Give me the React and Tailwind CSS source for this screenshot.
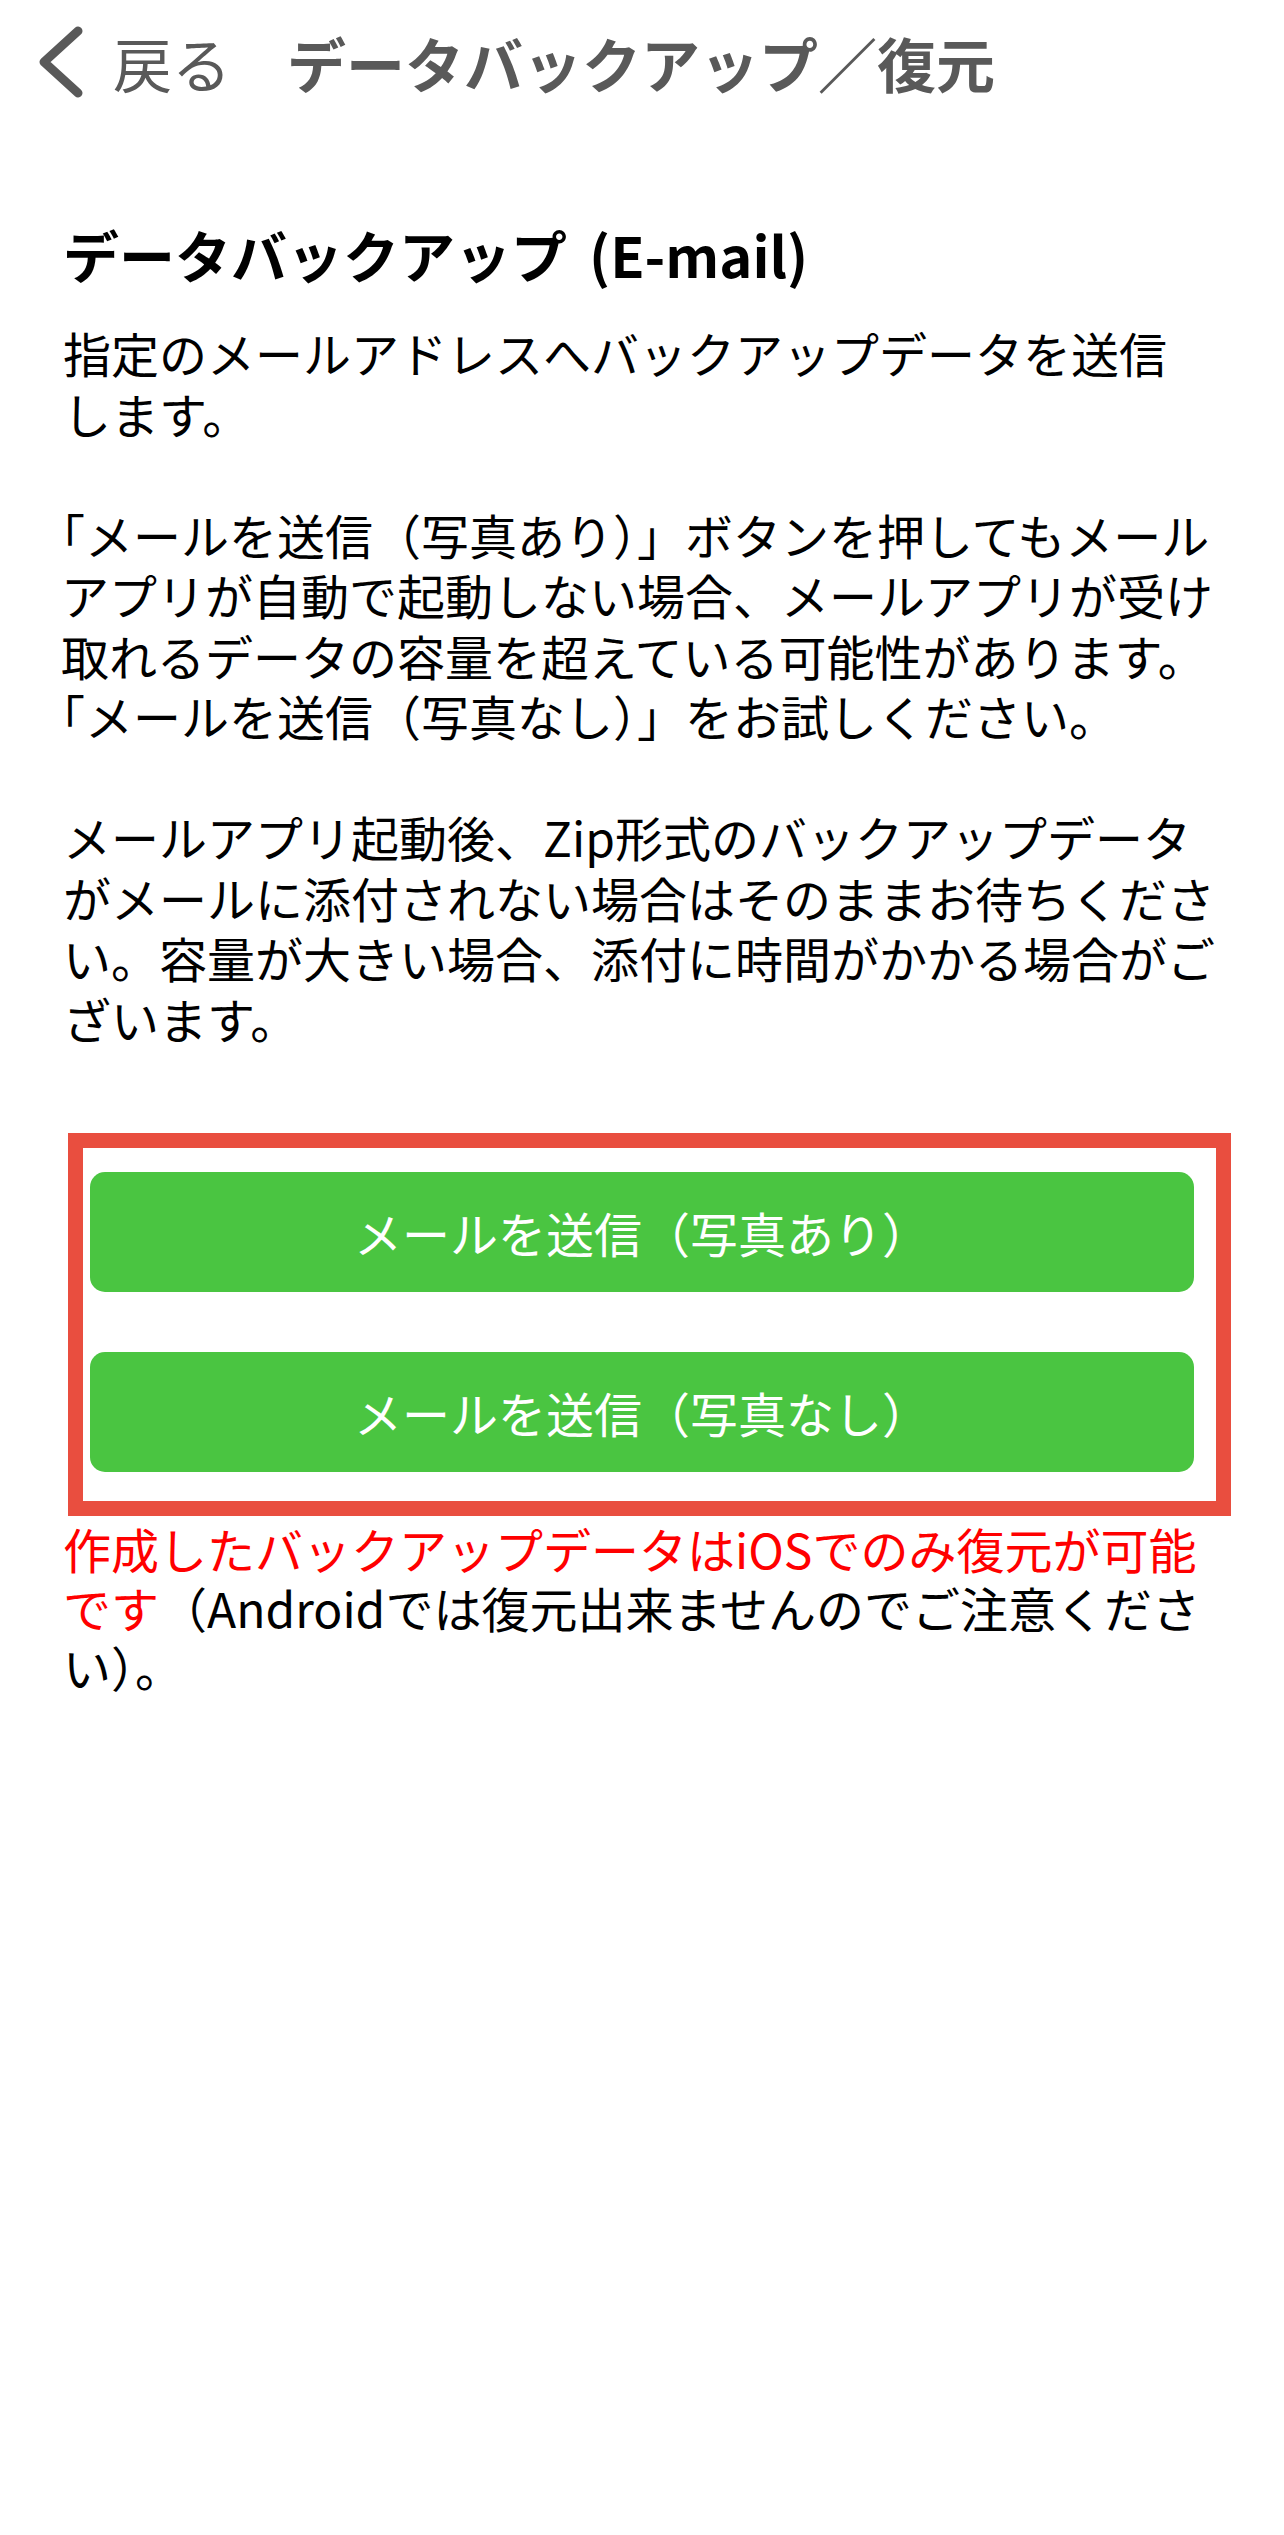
export default function App() {
  return (
    <div className="w-[1284px] min-h-[2535px] bg-white text-black font-['Noto_Sans_CJK_JP','Noto_Sans',sans-serif]">
      <header className="flex items-center h-[124px]">
        <svg className="ml-[36px]" width="48" height="80" viewBox="0 0 48 80" fill="none">
          <path d="M42 9 L8 40 L42 71" stroke="#595959" strokeWidth="9" strokeLinecap="round" strokeLinejoin="round" />
        </svg>
        <span className="ml-[29px] text-[59px] leading-none text-[#595959]">戻る</span>
        <h1 className="ml-[56px] text-[59px] leading-none font-bold text-[#595959]">データバックアップ／復元</h1>
      </header>

      <main className="px-[63px]">
        <h2 className="mt-[96px] text-[56px] leading-[68px] font-bold">
          データバックアップ<span className="ml-[22px]">(E-mail)</span>
        </h2>

        <div className="mt-[34px] text-[48px] leading-[60.5px]">
          <p>
            指定のメールアドレスへバックアップデータを送信
            <br />
            します。
          </p>
          <p className="mt-[60.5px] -ml-[2px]">
            <span className="[font-feature-settings:'halt']">「</span>メールを送信（写真あり
            <span className="[font-feature-settings:'halt']">）</span>」ボタンを押してもメール
            <br />
            アプリが自動で起動しない場合、メールアプリが受け
            <br />
            取れるデータの容量を超えている可能性があります。
            <br />
            <span className="[font-feature-settings:'halt']">「</span>メールを送信（写真なし
            <span className="[font-feature-settings:'halt']">）</span>」をお試しください。
          </p>
          <p className="mt-[60.5px]">
            メールアプリ起動後、Zip形式のバックアップデータ
            <br />
            がメールに添付されない場合はそのままお待ちくださ
            <br />
            い。容量が大きい場合、添付に時間がかかる場合がご
            <br />
            ざいます。
          </p>
        </div>
      </main>

      <div className="mt-[85px] ml-[68px] w-[1163px] h-[383px] border-[15px] border-[#e94e3f] pt-[24px] pl-[7px] flex flex-col gap-[60px]">
        <button className="w-[1104px] h-[120px] rounded-[15px] bg-[#4ac541] text-white text-[48px] leading-none">
          メールを送信（写真あり）
        </button>
        <button className="w-[1104px] h-[120px] rounded-[15px] bg-[#4ac541] text-white text-[48px] leading-none">
          メールを送信（写真なし）
        </button>
      </div>

      <p className="mt-[3px] px-[63px] text-[48px] leading-[59px]">
        <span className="text-[#ff0000]">
          作成したバックアップデータはiOSでのみ復元が可能
          <br />
          です
        </span>
        （Androidでは復元出来ませんのでご注意くださ
        <br />
        い）。
      </p>
    </div>
  );
}
